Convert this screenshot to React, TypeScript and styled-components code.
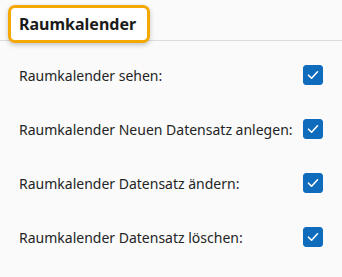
import React, { useState } from 'react';
import styled, { createGlobalStyle } from 'styled-components';

const GlobalStyle = createGlobalStyle`
  * {
    box-sizing: border-box;
  }
  body {
    margin: 0;
    font-family: 'Noto Sans', 'Open Sans', sans-serif;
    background-color: #fafafa;
    color: #222;
  }
`;
const Panel = styled.div`
  width: 342px;
  height: 277px;
  background-color: #fafafa;
`;
const Header = styled.div`
  height: 41px;
  padding: 5px 0 0 8px;
  border-bottom: 1px solid #dcdcdc;
`;
const Title = styled.h2`
  display: inline-flex;
  align-items: center;
  height: 38px;
  margin: 0;
  padding: 0 11px 0 8px;
  font-size: 16px;
  font-weight: 700;
  color: #1b1b1b;
  background-color: #fff;
  border: 3px solid #f5a800;
  border-radius: 7px;
  box-shadow: 0 2px 5px rgba(0, 0, 0, 0.22);
  position: relative;
`;
const List = styled.div`
  display: flex;
  flex-direction: column;
  padding: 7px 19px 0 19px;
`;
const Row = styled.label`
  display: flex;
  align-items: center;
  justify-content: space-between;
  height: 54px;
  font-size: 14px;
  color: #242424;
  cursor: pointer;
`;
const Box = styled.span<{ $checked: boolean }>`
  display: flex;
  align-items: center;
  justify-content: center;
  width: 20px;
  height: 20px;
  border-radius: 3px;
  background-color: ${(p) => (p.$checked ? '#0f6cbd' : '#fff')};
  border: 1px solid ${(p) => (p.$checked ? '#0f6cbd' : '#8a8a8a')};
`;

const rights = [
  'Raumkalender sehen:',
  'Raumkalender Neuen Datensatz anlegen:',
  'Raumkalender Datensatz ändern:',
  'Raumkalender Datensatz löschen:',
];

const App = () => {
  const [checked, setChecked] = useState(rights.map(() => true));

  return (
    <Panel>
      <GlobalStyle />
      <Header>
        <Title>Raumkalender</Title>
      </Header>
      <List>
        {rights.map((right, i) => (
          <Row
            key={right}
            onClick={() =>
              setChecked((c) => c.map((v, j) => (j === i ? !v : v)))
            }
          >
            {right}
            <Box $checked={checked[i]}>
              {checked[i] && (
                <svg width="12" height="10" viewBox="0 0 12 10">
                  <path
                    d="M1.5 5.2 L4.6 8.2 L10.5 1.8"
                    fill="none"
                    stroke="#fff"
                    strokeWidth="1.6"
                    strokeLinecap="round"
                    strokeLinejoin="round"
                  />
                </svg>
              )}
            </Box>
          </Row>
        ))}
      </List>
    </Panel>
  );
};

export default App;
